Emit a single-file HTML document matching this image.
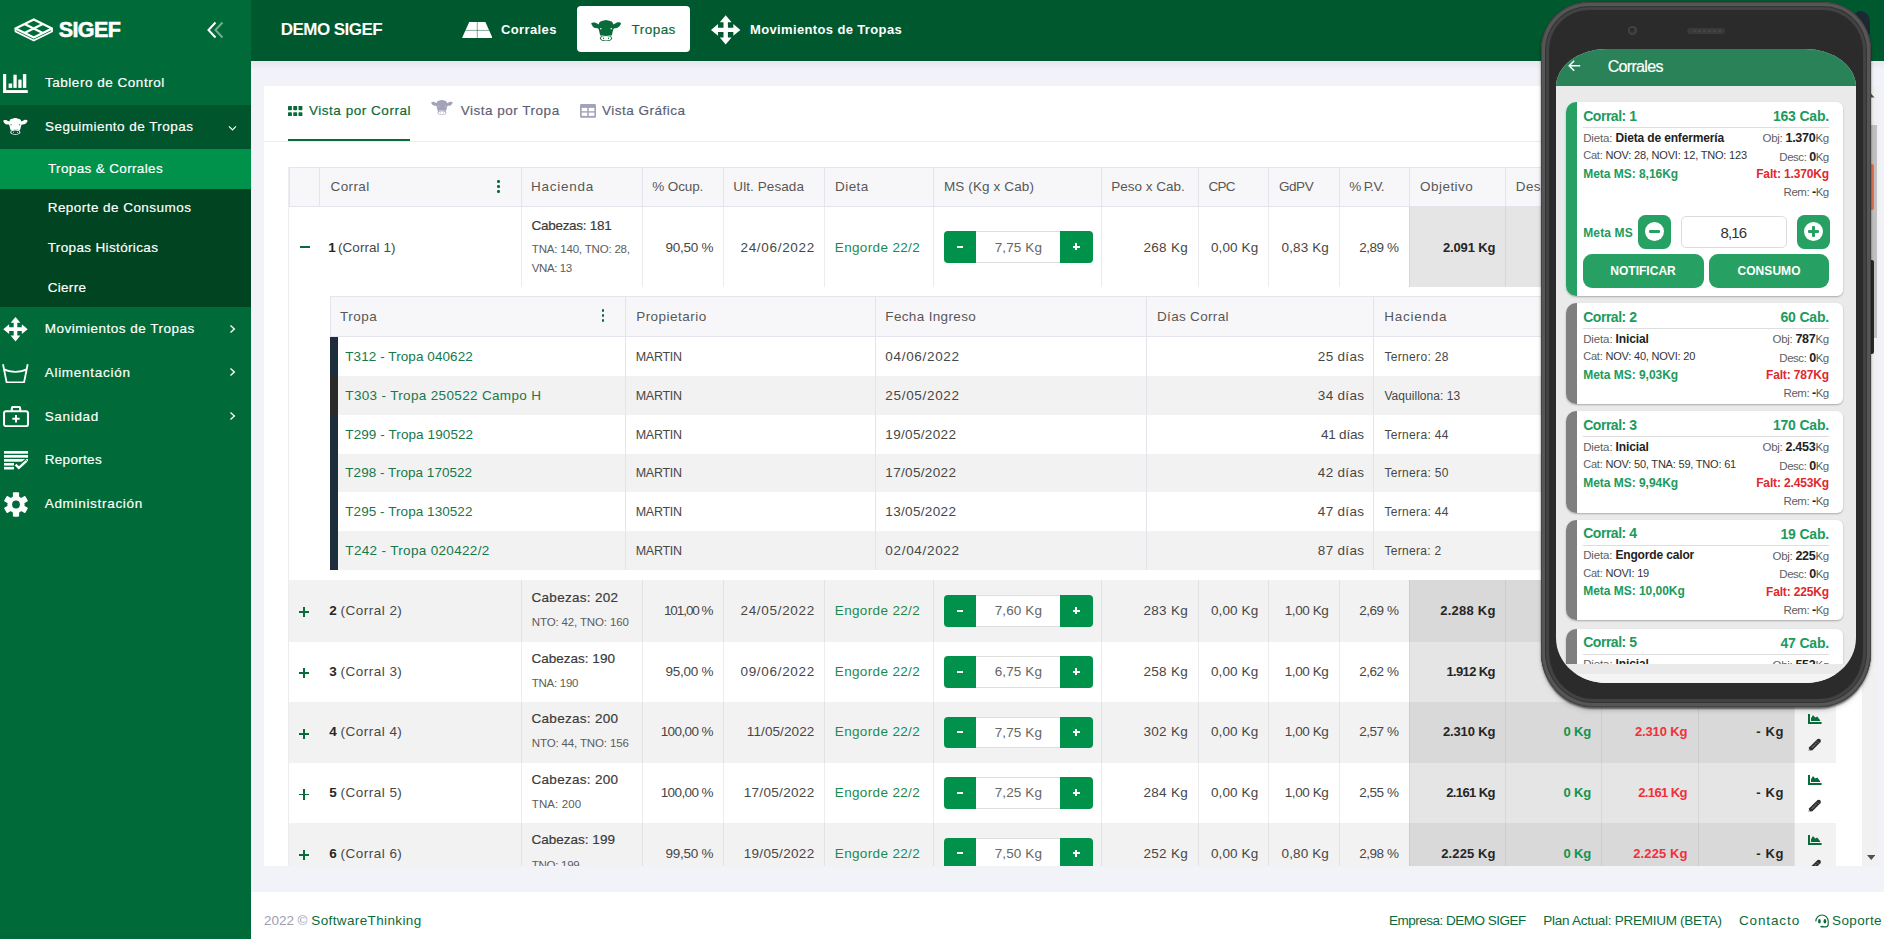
<!DOCTYPE html>
<html><head><meta charset="utf-8"><title>SIGEF</title>
<style>
html,body{margin:0;padding:0;}
body{width:1884px;height:939px;overflow:hidden;position:relative;background:#f2f3f8;font-family:"Liberation Sans",sans-serif;}
.t{position:absolute;white-space:nowrap;display:block;}
.r{position:absolute;display:block;}
</style></head><body>
<div class="r" style="left:251.00px;top:0.00px;width:1633.00px;height:61.00px;background:#00582e;"></div>
<div class="r" style="left:251.00px;top:61.00px;width:1633.00px;height:9.00px;background:linear-gradient(#e6e7ef,#f2f3f8);"></div>
<div class="r" style="left:251.00px;top:891.50px;width:1633.00px;height:47.50px;background:#fff;"></div>
<div class="r" style="left:0.00px;top:0.00px;width:251.00px;height:939.00px;background:#006b38;"></div>
<div class="r" style="left:0.00px;top:105.00px;width:251.00px;height:43.60px;background:#00552c;"></div>
<div class="r" style="left:0.00px;top:148.60px;width:251.00px;height:158.40px;background:#004421;"></div>
<div class="r" style="left:0.00px;top:148.60px;width:251.00px;height:40.20px;background:#00914a;"></div>
<svg class="r" style="left:13.50px;top:17.50px;" width="39.50" height="24.00" viewBox="0 0 79 48"><g fill="none" stroke="#fff" stroke-width="4.6" stroke-linejoin="round"><path d="M39.5 3 L76 21 L39.5 39 L3 21 Z"/><path d="M21 12 L57.5 30 M57.5 12 L21 30"/></g><path d="M3 21 V27 L39.5 45 L76 27 V21" fill="none" stroke="#fff" stroke-width="3.6" stroke-linejoin="round"/></svg>
<span class="t" style="left:58.80px;top:17.80px;font-size:21.5px;line-height:24px;font-weight:700;color:#fff;letter-spacing:-0.629px;-webkit-text-stroke:.55px #fff;">SIGEF</span>
<svg class="r" style="left:205.00px;top:20.00px;" width="21.00" height="20.00" viewBox="0 0 21 20"><path d="M10.5 2.5 L3.5 10 L10.5 17.5" fill="none" stroke="#fff" stroke-width="2"/><path d="M17.5 2.5 L10.5 10 L17.5 17.5" fill="none" stroke="#fff" stroke-opacity=".45" stroke-width="2"/></svg>
<svg class="r" style="left:3.00px;top:73.80px;" width="24.80" height="19.50" viewBox="0 0 24.8 19.5"><g fill="#fff"><rect x="0" y="0" width="3.2" height="19.5"/><rect x="0" y="16.1" width="24.8" height="3.4"/><rect x="5.6" y="9.5" width="3.6" height="4.4"/><rect x="10.4" y="0.7" width="3.3" height="13.2"/><rect x="15.3" y="5.6" width="3.3" height="8.3"/><rect x="19.9" y="0.1" width="3.4" height="13.8"/></g></svg>
<span class="t" style="left:45.00px;top:72.90px;font-size:13.5px;line-height:20px;color:#fff;letter-spacing:0.524px;-webkit-text-stroke:.18px;">Tablero de Control</span>
<svg class="r" style="left:3.00px;top:118.00px;" width="24.80" height="16.80" viewBox="0 0 100 71" preserveAspectRatio="none"><path fill="#fff" d="M0.6 11.3 C3 8 10 7 14.7 9 C19 10.5 22 13 26 15.2 C26.5 11 27 9 28.2 7.3 C30 5 33 4 36.2 3.4 C40 3 45 0 49.2 0 C54 0 59 3 63.3 3.4 C67 4 70 5.5 71.2 7.9 C72.5 10 73.5 12 74 15.2 C78 13 82 10 85.9 8.5 C91 7 97 8 99.4 11.3 C99 14 97.5 17 94.9 19.7 C92 23 89 25.5 85.9 26.5 C82 27.5 79 27.6 76.8 27.6 C75 29 74 30.5 73.4 32.1 C72.5 36 71.5 40 70.6 44.5 C69.5 48 68.8 50.5 67.8 52.4 C64 50 57 49.5 49.7 49.5 C43 49.5 36 50 31.6 52.4 C30.5 50 29.5 47.5 28.8 44.5 C28 40 27 36 26 32.1 C25.5 30 24.5 28.5 22.6 27 C19 27.3 15 27 11.3 25.9 C8 24.5 5.5 21.5 3.4 17.5 C2 15 1 13 0.6 11.3 Z"/><ellipse cx="49.7" cy="60.3" rx="20" ry="10.5" fill="#fff"/><ellipse cx="49.7" cy="60.6" rx="16.6" ry="7.4" fill="#00552c"/><ellipse cx="41.8" cy="60.4" rx="1.7" ry="2.8" fill="#fff"/><ellipse cx="58" cy="60.4" rx="1.7" ry="2.8" fill="#fff"/><ellipse cx="32.6" cy="28.8" rx="2.7" ry="2.3" fill="#00552c"/><ellipse cx="67.2" cy="28.8" rx="2.7" ry="2.3" fill="#00552c"/></svg>
<span class="t" style="left:45.00px;top:117.10px;font-size:13.5px;line-height:20px;color:#fff;letter-spacing:0.454px;-webkit-text-stroke:.18px;">Seguimiento de Tropas</span>
<svg class="r" style="left:227.00px;top:124.00px;" width="11.00" height="9.00" viewBox="0 0 11 9"><path d="M2 2.4 L5.5 6 L9 2.4" fill="none" stroke="#fff" stroke-width="1.15"/></svg>
<span class="t" style="left:48.00px;top:158.90px;font-size:13.5px;line-height:20px;color:#fff;letter-spacing:0.350px;-webkit-text-stroke:.18px;">Tropas &amp; Corrales</span>
<span class="t" style="left:47.70px;top:198.20px;font-size:13.5px;line-height:20px;color:#fff;letter-spacing:0.452px;-webkit-text-stroke:.18px;">Reporte de Consumos</span>
<span class="t" style="left:47.70px;top:237.80px;font-size:13.5px;line-height:20px;color:#fff;letter-spacing:0.358px;-webkit-text-stroke:.18px;">Tropas Históricas</span>
<span class="t" style="left:47.70px;top:277.60px;font-size:13.5px;line-height:20px;color:#fff;letter-spacing:0.304px;-webkit-text-stroke:.18px;">Cierre</span>
<svg class="r" style="left:2.70px;top:317.30px;" width="25.00" height="24.40" viewBox="0 0 100 100"><g fill="#fff"><path d="M50 0 L70 24 H57.5 V42.5 H76 V30 L100 50 L76 70 V57.5 H57.5 V76 H70 L50 100 L30 76 H42.5 V57.5 H24 V70 L0 50 L24 30 V42.5 H42.5 V24 H30 Z"/></g></svg>
<span class="t" style="left:44.70px;top:319.30px;font-size:13.5px;line-height:20px;color:#fff;letter-spacing:0.498px;-webkit-text-stroke:.18px;">Movimientos de Tropas</span>
<svg class="r" style="left:2.30px;top:362.50px;" width="26.70" height="20.50" viewBox="0 0 26.7 20.5"><path d="M1 1.2 L4.6 19.3 H22.1 L25.7 1.2" fill="none" stroke="#fff" stroke-width="1.8" stroke-linejoin="round"/><path d="M2 6.3 C8 9.6 18.7 9.6 24.7 6.3" fill="none" stroke="#fff" stroke-width="1.8"/></svg>
<span class="t" style="left:44.70px;top:362.90px;font-size:13.5px;line-height:20px;color:#fff;letter-spacing:0.725px;-webkit-text-stroke:.18px;">Alimentación</span>
<svg class="r" style="left:2.50px;top:406.00px;" width="26.00" height="21.30" viewBox="0 0 26 21.3"><rect x="1" y="5.2" width="24" height="15" rx="2" fill="none" stroke="#fff" stroke-width="2.1"/><path d="M8.8 5 V2.3 Q8.8 1 10.1 1 H15.9 Q17.2 1 17.2 2.3 V5" fill="none" stroke="#fff" stroke-width="2.1"/><path d="M13 9 V16.4 M9.3 12.7 H16.7" stroke="#fff" stroke-width="2"/></svg>
<span class="t" style="left:44.70px;top:406.60px;font-size:13.5px;line-height:20px;color:#fff;letter-spacing:0.670px;-webkit-text-stroke:.18px;">Sanidad</span>
<svg class="r" style="left:3.50px;top:451.00px;" width="24.00" height="18.50" viewBox="0 0 24 18.5"><g fill="#fff"><rect x="0" y="0" width="24" height="2.7"/><rect x="0" y="4" width="24" height="2.7"/><rect x="0" y="8" width="24" height="2.7"/><rect x="0" y="12" width="10" height="2.6"/><rect x="0" y="15.9" width="10" height="2.6"/></g><path d="M11.6 13.6 L14.8 16.8 L23 9.6" fill="none" stroke="#006b38" stroke-width="5"/><path d="M11.6 13.6 L14.8 16.8 L22.6 9.8" fill="none" stroke="#fff" stroke-width="2.3"/></svg>
<span class="t" style="left:44.70px;top:450.30px;font-size:13.5px;line-height:20px;color:#fff;letter-spacing:0.312px;-webkit-text-stroke:.18px;">Reportes</span>
<svg class="r" style="left:3.50px;top:491.50px;" width="24.00" height="25.00" viewBox="-12 -12.5 24 25"><g fill="#fff"><circle r="8.6"/><rect x="-3.1" y="-12.2" width="6.2" height="6" rx="1" transform="rotate(0)"/><rect x="-3.1" y="-12.2" width="6.2" height="6" rx="1" transform="rotate(60)"/><rect x="-3.1" y="-12.2" width="6.2" height="6" rx="1" transform="rotate(120)"/><rect x="-3.1" y="-12.2" width="6.2" height="6" rx="1" transform="rotate(180)"/><rect x="-3.1" y="-12.2" width="6.2" height="6" rx="1" transform="rotate(240)"/><rect x="-3.1" y="-12.2" width="6.2" height="6" rx="1" transform="rotate(300)"/></g><circle r="3.9" fill="#006b38"/></svg>
<span class="t" style="left:44.70px;top:493.90px;font-size:13.5px;line-height:20px;color:#fff;letter-spacing:0.694px;-webkit-text-stroke:.18px;">Administración</span>
<svg class="r" style="left:228.00px;top:323.70px;" width="9.00" height="10.00" viewBox="0 0 9 10"><path d="M2.5 1.6 L6.3 5 L2.5 8.4" fill="none" stroke="#fff" stroke-width="1.4"/></svg>
<svg class="r" style="left:228.00px;top:367.30px;" width="9.00" height="10.00" viewBox="0 0 9 10"><path d="M2.5 1.6 L6.3 5 L2.5 8.4" fill="none" stroke="#fff" stroke-width="1.4"/></svg>
<svg class="r" style="left:228.00px;top:411.00px;" width="9.00" height="10.00" viewBox="0 0 9 10"><path d="M2.5 1.6 L6.3 5 L2.5 8.4" fill="none" stroke="#fff" stroke-width="1.4"/></svg>
<span class="t" style="left:280.70px;top:18.80px;font-size:17px;line-height:22px;font-weight:700;color:#fff;letter-spacing:-0.526px;">DEMO SIGEF</span>
<svg class="r" style="left:461.70px;top:21.70px;" width="30.60" height="16.10" viewBox="0 0 30.6 16.1"><path d="M7.2 0 H23.4 L30.6 16.1 H0 Z" fill="#fff"/><path d="M15.3 0 V16.1 M3.3 8.4 H27.3" stroke="#00582e" stroke-width="0.9" stroke-opacity=".55"/></svg>
<span class="t" style="left:501.00px;top:19.90px;font-size:13px;line-height:20px;font-weight:700;color:#fff;letter-spacing:0.376px;">Corrales</span>
<div class="r" style="left:577.00px;top:5.60px;width:113.20px;height:46.60px;background:#fff;border-radius:4px;"></div>
<svg class="r" style="left:590.80px;top:19.60px;" width="30.20" height="21.50" viewBox="0 0 100 71" preserveAspectRatio="none"><path fill="#0a6b3a" d="M0.6 11.3 C3 8 10 7 14.7 9 C19 10.5 22 13 26 15.2 C26.5 11 27 9 28.2 7.3 C30 5 33 4 36.2 3.4 C40 3 45 0 49.2 0 C54 0 59 3 63.3 3.4 C67 4 70 5.5 71.2 7.9 C72.5 10 73.5 12 74 15.2 C78 13 82 10 85.9 8.5 C91 7 97 8 99.4 11.3 C99 14 97.5 17 94.9 19.7 C92 23 89 25.5 85.9 26.5 C82 27.5 79 27.6 76.8 27.6 C75 29 74 30.5 73.4 32.1 C72.5 36 71.5 40 70.6 44.5 C69.5 48 68.8 50.5 67.8 52.4 C64 50 57 49.5 49.7 49.5 C43 49.5 36 50 31.6 52.4 C30.5 50 29.5 47.5 28.8 44.5 C28 40 27 36 26 32.1 C25.5 30 24.5 28.5 22.6 27 C19 27.3 15 27 11.3 25.9 C8 24.5 5.5 21.5 3.4 17.5 C2 15 1 13 0.6 11.3 Z"/><ellipse cx="49.7" cy="60.3" rx="20" ry="10.5" fill="#0a6b3a"/><ellipse cx="49.7" cy="60.6" rx="16.6" ry="7.4" fill="#fff"/><ellipse cx="41.8" cy="60.4" rx="1.7" ry="2.8" fill="#0a6b3a"/><ellipse cx="58" cy="60.4" rx="1.7" ry="2.8" fill="#0a6b3a"/><ellipse cx="32.6" cy="28.8" rx="2.7" ry="2.3" fill="#fff"/><ellipse cx="67.2" cy="28.8" rx="2.7" ry="2.3" fill="#fff"/></svg>
<span class="t" style="left:631.60px;top:19.90px;font-size:13.5px;line-height:20px;color:#0a6b3a;letter-spacing:0.451px;-webkit-text-stroke:.18px;">Tropas</span>
<svg class="r" style="left:711.30px;top:14.80px;" width="29.40" height="29.80" viewBox="0 0 100 100"><g fill="#fff"><path d="M50 0 L70 24 H57.5 V42.5 H76 V30 L100 50 L76 70 V57.5 H57.5 V76 H70 L50 100 L30 76 H42.5 V57.5 H24 V70 L0 50 L24 30 V42.5 H42.5 V24 H30 Z"/></g></svg>
<span class="t" style="left:750.00px;top:19.90px;font-size:13px;line-height:20px;font-weight:700;color:#fff;letter-spacing:0.362px;">Movimientos de Tropas</span>
<div class="r" style="left:264.00px;top:86.30px;width:1615.00px;height:780.10px;background:#fff;"></div>
<div class="r" style="left:1862.00px;top:86.30px;width:17.00px;height:780.10px;background:#f1f1f1;"></div>
<div class="r" style="left:1864.00px;top:125.00px;width:13.00px;height:213.00px;background:#c1c1c1;"></div>
<svg class="r" style="left:1866.00px;top:92.00px;" width="9.00" height="6.00" viewBox="0 0 9 6"><path d="M0.5 5.5 L4.5 1 L8.5 5.5 Z" fill="#505050"/></svg>
<svg class="r" style="left:1866.50px;top:855.00px;" width="8.50" height="5.00" viewBox="0 0 8.5 5"><path d="M0 0 H8.5 L4.25 5 Z" fill="#505050"/></svg>
<svg class="r" style="left:288.20px;top:105.80px;" width="14.40" height="10.50" viewBox="0 0 14.4 10.5"><g fill="#0a6b3a"><rect x="0" y="0" width="3.9" height="4.2" rx=".6"/><rect x="0" y="6.3" width="3.9" height="4.2" rx=".6"/><rect x="5.25" y="0" width="3.9" height="4.2" rx=".6"/><rect x="5.25" y="6.3" width="3.9" height="4.2" rx=".6"/><rect x="10.5" y="0" width="3.9" height="4.2" rx=".6"/><rect x="10.5" y="6.3" width="3.9" height="4.2" rx=".6"/></g></svg>
<span class="t" style="left:309.00px;top:100.90px;font-size:13.5px;line-height:20px;color:#0a6b3a;letter-spacing:0.528px;-webkit-text-stroke:.18px;">Vista por Corral</span>
<div class="r" style="left:288.20px;top:139.00px;width:122.30px;height:2.00px;background:#0a6b3a;"></div>
<div class="r" style="left:264.00px;top:141.00px;width:1598.00px;height:1.00px;background:#ebedf2;"></div>
<svg class="r" style="left:430.70px;top:99.50px;" width="21.90" height="15.10" viewBox="0 0 100 71" preserveAspectRatio="none"><path fill="#a2a3b9" d="M0.6 11.3 C3 8 10 7 14.7 9 C19 10.5 22 13 26 15.2 C26.5 11 27 9 28.2 7.3 C30 5 33 4 36.2 3.4 C40 3 45 0 49.2 0 C54 0 59 3 63.3 3.4 C67 4 70 5.5 71.2 7.9 C72.5 10 73.5 12 74 15.2 C78 13 82 10 85.9 8.5 C91 7 97 8 99.4 11.3 C99 14 97.5 17 94.9 19.7 C92 23 89 25.5 85.9 26.5 C82 27.5 79 27.6 76.8 27.6 C75 29 74 30.5 73.4 32.1 C72.5 36 71.5 40 70.6 44.5 C69.5 48 68.8 50.5 67.8 52.4 C64 50 57 49.5 49.7 49.5 C43 49.5 36 50 31.6 52.4 C30.5 50 29.5 47.5 28.8 44.5 C28 40 27 36 26 32.1 C25.5 30 24.5 28.5 22.6 27 C19 27.3 15 27 11.3 25.9 C8 24.5 5.5 21.5 3.4 17.5 C2 15 1 13 0.6 11.3 Z"/><ellipse cx="49.7" cy="60.3" rx="20" ry="10.5" fill="#a2a3b9"/><ellipse cx="49.7" cy="60.6" rx="16.6" ry="7.4" fill="#fff"/><ellipse cx="41.8" cy="60.4" rx="1.7" ry="2.8" fill="#a2a3b9"/><ellipse cx="58" cy="60.4" rx="1.7" ry="2.8" fill="#a2a3b9"/><ellipse cx="32.6" cy="28.8" rx="2.7" ry="2.3" fill="#fff"/><ellipse cx="67.2" cy="28.8" rx="2.7" ry="2.3" fill="#fff"/></svg>
<span class="t" style="left:460.70px;top:100.90px;font-size:13.5px;line-height:20px;color:#5d5f77;letter-spacing:0.511px;-webkit-text-stroke:.18px;">Vista por Tropa</span>
<svg class="r" style="left:579.50px;top:104.20px;" width="16.10" height="13.80" viewBox="0 0 16.1 13.8"><rect width="16.1" height="13.8" rx="1.3" fill="#a2a3b9"/><g fill="#fff"><rect x="1.7" y="3.9" width="5.6" height="3.3"/><rect x="8.8" y="3.9" width="5.6" height="3.3"/><rect x="1.7" y="8.6" width="5.6" height="3.3"/><rect x="8.8" y="8.6" width="5.6" height="3.3"/></g></svg>
<span class="t" style="left:602.00px;top:100.90px;font-size:13.5px;line-height:20px;color:#5d5f77;letter-spacing:0.496px;-webkit-text-stroke:.18px;">Vista Gráfica</span>
<div class="r" style="left:0;top:0;width:1862px;height:866.4px;overflow:hidden">
<div class="r" style="left:288.80px;top:167.00px;width:1547.50px;height:39.75px;background:#f7f7fa;box-sizing:border-box;border:1px solid #e4e5ec;"></div>
<div class="r" style="left:319.00px;top:167.00px;width:1.00px;height:39.75px;background:#e4e5ec;"></div>
<div class="r" style="left:520.90px;top:167.00px;width:1.00px;height:39.75px;background:#e4e5ec;"></div>
<div class="r" style="left:642.00px;top:167.00px;width:1.00px;height:39.75px;background:#e4e5ec;"></div>
<div class="r" style="left:723.20px;top:167.00px;width:1.00px;height:39.75px;background:#e4e5ec;"></div>
<div class="r" style="left:824.00px;top:167.00px;width:1.00px;height:39.75px;background:#e4e5ec;"></div>
<div class="r" style="left:933.10px;top:167.00px;width:1.00px;height:39.75px;background:#e4e5ec;"></div>
<div class="r" style="left:1100.90px;top:167.00px;width:1.00px;height:39.75px;background:#e4e5ec;"></div>
<div class="r" style="left:1197.90px;top:167.00px;width:1.00px;height:39.75px;background:#e4e5ec;"></div>
<div class="r" style="left:1267.90px;top:167.00px;width:1.00px;height:39.75px;background:#e4e5ec;"></div>
<div class="r" style="left:1338.50px;top:167.00px;width:1.00px;height:39.75px;background:#e4e5ec;"></div>
<div class="r" style="left:1408.80px;top:167.00px;width:1.00px;height:39.75px;background:#e4e5ec;"></div>
<div class="r" style="left:1504.80px;top:167.00px;width:1.00px;height:39.75px;background:#e4e5ec;"></div>
<div class="r" style="left:1600.80px;top:167.00px;width:1.00px;height:39.75px;background:#e4e5ec;"></div>
<div class="r" style="left:1697.80px;top:167.00px;width:1.00px;height:39.75px;background:#e4e5ec;"></div>
<div class="r" style="left:1794.30px;top:167.00px;width:1.00px;height:39.75px;background:#e4e5ec;"></div>
<span class="t" style="left:330.50px;top:177.10px;font-size:13.5px;line-height:20px;color:#575757;letter-spacing:0.394px;">Corral</span>
<span class="t" style="left:531.00px;top:177.10px;font-size:13.5px;line-height:20px;color:#575757;letter-spacing:0.746px;">Hacienda</span>
<span class="t" style="left:652.30px;top:177.10px;font-size:13.5px;line-height:20px;color:#575757;letter-spacing:-0.130px;">% Ocup.</span>
<span class="t" style="left:733.30px;top:177.10px;font-size:13.5px;line-height:20px;color:#575757;letter-spacing:0.089px;">Ult. Pesada</span>
<span class="t" style="left:835.00px;top:177.10px;font-size:13.5px;line-height:20px;color:#575757;letter-spacing:0.442px;">Dieta</span>
<span class="t" style="left:944.00px;top:177.10px;font-size:13.5px;line-height:20px;color:#575757;letter-spacing:0.121px;">MS (Kg x Cab)</span>
<span class="t" style="left:1111.20px;top:177.10px;font-size:13.5px;line-height:20px;color:#575757;letter-spacing:-0.006px;">Peso x Cab.</span>
<span class="t" style="left:1208.60px;top:177.10px;font-size:13.5px;line-height:20px;color:#575757;letter-spacing:-0.750px;">CPC</span>
<span class="t" style="left:1278.90px;top:177.10px;font-size:13.5px;line-height:20px;color:#575757;letter-spacing:-0.405px;">GdPV</span>
<span class="t" style="left:1349.20px;top:177.10px;font-size:13.5px;line-height:20px;color:#575757;letter-spacing:-0.616px;">% P.V.</span>
<span class="t" style="left:1419.90px;top:177.10px;font-size:13.5px;line-height:20px;color:#575757;letter-spacing:0.493px;">Objetivo</span>
<span class="t" style="left:1515.80px;top:177.10px;font-size:13.5px;line-height:20px;color:#575757;letter-spacing:0.371px;">Desc.</span>
<span class="t" style="left:1612.00px;top:177.10px;font-size:13.5px;line-height:20px;color:#575757;letter-spacing:0.434px;">Falt.</span>
<span class="t" style="left:1709.00px;top:177.10px;font-size:13.5px;line-height:20px;color:#575757;letter-spacing:-0.422px;">Rem.</span>
<div class="r" style="left:497.40px;top:180.00px;width:2.60px;height:2.60px;background:#0a6b3a;border-radius:50%;"></div>
<div class="r" style="left:497.40px;top:185.00px;width:2.60px;height:2.60px;background:#0a6b3a;border-radius:50%;"></div>
<div class="r" style="left:497.40px;top:190.00px;width:2.60px;height:2.60px;background:#0a6b3a;border-radius:50%;"></div>
<div class="r" style="left:288.80px;top:287.00px;width:1547.50px;height:293.00px;background:#fff;"></div>
<div class="r" style="left:288.80px;top:206.75px;width:1547.50px;height:80.25px;background:#fff;"></div>
<div class="r" style="left:1409.30px;top:206.75px;width:385.50px;height:80.25px;background:#e5e5e5;"></div>
<div class="r" style="left:520.90px;top:206.75px;width:1.00px;height:80.25px;background:#ebebf0;"></div>
<div class="r" style="left:642.00px;top:206.75px;width:1.00px;height:80.25px;background:#ebebf0;"></div>
<div class="r" style="left:723.20px;top:206.75px;width:1.00px;height:80.25px;background:#ebebf0;"></div>
<div class="r" style="left:824.00px;top:206.75px;width:1.00px;height:80.25px;background:#ebebf0;"></div>
<div class="r" style="left:933.10px;top:206.75px;width:1.00px;height:80.25px;background:#ebebf0;"></div>
<div class="r" style="left:1100.90px;top:206.75px;width:1.00px;height:80.25px;background:#ebebf0;"></div>
<div class="r" style="left:1197.90px;top:206.75px;width:1.00px;height:80.25px;background:#ebebf0;"></div>
<div class="r" style="left:1267.90px;top:206.75px;width:1.00px;height:80.25px;background:#ebebf0;"></div>
<div class="r" style="left:1338.50px;top:206.75px;width:1.00px;height:80.25px;background:#ebebf0;"></div>
<div class="r" style="left:1408.80px;top:206.75px;width:1.00px;height:80.25px;background:#d6d8d8;"></div>
<div class="r" style="left:1504.80px;top:206.75px;width:1.00px;height:80.25px;background:#d6d8d8;"></div>
<div class="r" style="left:1600.80px;top:206.75px;width:1.00px;height:80.25px;background:#d6d8d8;"></div>
<div class="r" style="left:1697.80px;top:206.75px;width:1.00px;height:80.25px;background:#d6d8d8;"></div>
<div class="r" style="left:1794.30px;top:206.75px;width:1.00px;height:80.25px;background:#ebebf0;"></div>
<div class="r" style="left:299.50px;top:246.47px;width:10.00px;height:2.00px;background:#0a6b3a;"></div>
<span class="t" style="left:328.30px;top:237.78px;font-size:13.5px;line-height:20px;font-weight:700;color:#262626;letter-spacing:0.000px;">1</span>
<span class="t" style="left:338.00px;top:237.78px;font-size:13.5px;line-height:20px;color:#474747;letter-spacing:0.061px;">(Corral 1)</span>
<span class="t" style="left:531.50px;top:215.55px;font-size:13.5px;line-height:20px;color:#3a3a3a;letter-spacing:-0.280px;-webkit-text-stroke:.18px;">Cabezas: 181</span>
<span class="t" style="left:531.80px;top:239.25px;font-size:11.5px;line-height:20px;color:#5c5c5c;letter-spacing:-0.188px;">TNA: 140, TNO: 28,</span>
<span class="t" style="left:531.80px;top:258.05px;font-size:11.5px;line-height:20px;color:#5c5c5c;letter-spacing:-0.397px;">VNA: 13</span>
<span class="t" style="left:665.60px;top:237.78px;font-size:13.5px;line-height:20px;color:#474747;letter-spacing:-0.276px;">90,50 %</span>
<span class="t" style="left:740.46px;top:237.78px;font-size:13.5px;line-height:20px;color:#474747;letter-spacing:0.691px;">24/06/2022</span>
<span class="t" style="left:834.80px;top:237.78px;font-size:13.5px;line-height:20px;color:#1b8a50;letter-spacing:0.352px;">Engorde 22/2</span>
<div class="r" style="left:943.90px;top:230.97px;width:31.80px;height:31.80px;background:#00914a;border-radius:4px 0 0 4px;"></div>
<div class="r" style="left:1059.70px;top:230.97px;width:32.90px;height:31.80px;background:#00914a;border-radius:0 4px 4px 0;"></div>
<div class="r" style="left:975.70px;top:230.97px;width:84.00px;height:31.80px;background:#fff;box-sizing:border-box;border-top:1px solid #dedede;border-bottom:1px solid #dedede;"></div>
<div class="r" style="left:956.50px;top:245.68px;width:6.50px;height:2.00px;background:#fff;"></div>
<div class="r" style="left:1072.70px;top:245.68px;width:7.00px;height:2.00px;background:#fff;"></div>
<div class="r" style="left:1075.20px;top:243.18px;width:2.00px;height:7.00px;background:#fff;"></div>
<span class="t" style="left:994.67px;top:238.08px;font-size:13.5px;line-height:20px;color:#666;letter-spacing:0.117px;">7,75 Kg</span>
<span class="t" style="left:1143.46px;top:237.78px;font-size:13.5px;line-height:20px;color:#474747;letter-spacing:0.306px;">268 Kg</span>
<span class="t" style="left:1210.93px;top:237.78px;font-size:13.5px;line-height:20px;color:#474747;letter-spacing:0.117px;">0,00 Kg</span>
<span class="t" style="left:1281.53px;top:237.78px;font-size:13.5px;line-height:20px;color:#474747;letter-spacing:0.117px;">0,83 Kg</span>
<span class="t" style="left:1359.15px;top:237.78px;font-size:13.5px;line-height:20px;color:#474747;letter-spacing:-0.440px;">2,89 %</span>
<span class="t" style="left:1443.00px;top:237.78px;font-size:13px;line-height:20px;font-weight:700;color:#262626;letter-spacing:-0.155px;">2.091 Kg</span>
<span class="t" style="left:1563.60px;top:237.78px;font-size:13px;line-height:20px;font-weight:700;color:#12934f;letter-spacing:-0.157px;">0 Kg</span>
<span class="t" style="left:1635.00px;top:237.78px;font-size:13px;line-height:20px;font-weight:700;color:#f1303a;letter-spacing:-0.155px;">2.091 Kg</span>
<span class="t" style="left:1756.20px;top:237.78px;font-size:13px;line-height:20px;font-weight:700;color:#262626;letter-spacing:0.678px;">- Kg</span>
<svg class="r" style="left:1808.40px;top:228.88px;" width="13.60" height="10.00" viewBox="0 0 13.6 10"><path d="M1 0 V9 H13.6" fill="none" stroke="#0a6b3a" stroke-width="2"/><path d="M3 7 V4.2 L5 1 L7.2 3.6 L9.2 2.4 L12.2 6.2 V7 Z" fill="#0a6b3a"/></svg>
<svg class="r" style="left:1808.40px;top:252.67px;" width="13.60" height="13.00" viewBox="0 0 13.6 13"><path d="M8.6 2 L11.6 5 L4.4 12.2 L0.6 12.8 L1.2 9.2 Z" fill="#2e2e2e"/><circle cx="10.7" cy="2.9" r="2.2" fill="#2e2e2e"/><path d="M3.6 10 L8.4 5.2" stroke="#e8e8e8" stroke-width=".7" stroke-dasharray="1 .5"/><path d="M0.7 12.7 L1 10.9 L2.5 12.4 Z" fill="#e0e0e0"/><path d="M8.9 3.3 L10.3 4.7" stroke="#e8e8e8" stroke-width=".5"/></svg>
<div class="r" style="left:288.80px;top:580.00px;width:1547.50px;height:61.80px;background:#f2f2f2;"></div>
<div class="r" style="left:1409.30px;top:580.00px;width:385.50px;height:61.80px;background:#d9d9d9;"></div>
<div class="r" style="left:520.90px;top:580.00px;width:1.00px;height:61.80px;background:#e2e2e6;"></div>
<div class="r" style="left:642.00px;top:580.00px;width:1.00px;height:61.80px;background:#e2e2e6;"></div>
<div class="r" style="left:723.20px;top:580.00px;width:1.00px;height:61.80px;background:#e2e2e6;"></div>
<div class="r" style="left:824.00px;top:580.00px;width:1.00px;height:61.80px;background:#e2e2e6;"></div>
<div class="r" style="left:933.10px;top:580.00px;width:1.00px;height:61.80px;background:#e2e2e6;"></div>
<div class="r" style="left:1100.90px;top:580.00px;width:1.00px;height:61.80px;background:#e2e2e6;"></div>
<div class="r" style="left:1197.90px;top:580.00px;width:1.00px;height:61.80px;background:#e2e2e6;"></div>
<div class="r" style="left:1267.90px;top:580.00px;width:1.00px;height:61.80px;background:#e2e2e6;"></div>
<div class="r" style="left:1338.50px;top:580.00px;width:1.00px;height:61.80px;background:#e2e2e6;"></div>
<div class="r" style="left:1408.80px;top:580.00px;width:1.00px;height:61.80px;background:#cbcdcd;"></div>
<div class="r" style="left:1504.80px;top:580.00px;width:1.00px;height:61.80px;background:#cbcdcd;"></div>
<div class="r" style="left:1600.80px;top:580.00px;width:1.00px;height:61.80px;background:#cbcdcd;"></div>
<div class="r" style="left:1697.80px;top:580.00px;width:1.00px;height:61.80px;background:#cbcdcd;"></div>
<div class="r" style="left:1794.30px;top:580.00px;width:1.00px;height:61.80px;background:#e2e2e6;"></div>
<div class="r" style="left:298.80px;top:611.40px;width:10.40px;height:1.80px;background:#0a6b3a;"></div>
<div class="r" style="left:303.10px;top:607.10px;width:1.80px;height:10.40px;background:#0a6b3a;"></div>
<span class="t" style="left:329.30px;top:600.80px;font-size:13.5px;line-height:20px;font-weight:700;color:#262626;letter-spacing:0.000px;">2</span>
<span class="t" style="left:340.60px;top:600.80px;font-size:13.5px;line-height:20px;color:#474747;letter-spacing:0.473px;">(Corral 2)</span>
<span class="t" style="left:531.50px;top:587.55px;font-size:13.5px;line-height:20px;color:#3a3a3a;letter-spacing:0.299px;-webkit-text-stroke:.18px;">Cabezas: 202</span>
<span class="t" style="left:531.80px;top:611.85px;font-size:11.5px;line-height:20px;color:#5c5c5c;letter-spacing:-0.144px;">NTO: 42, TNO: 160</span>
<span class="t" style="left:663.90px;top:600.80px;font-size:13.5px;line-height:20px;color:#474747;letter-spacing:-1.069px;">101,00 %</span>
<span class="t" style="left:740.46px;top:600.80px;font-size:13.5px;line-height:20px;color:#474747;letter-spacing:0.691px;">24/05/2022</span>
<span class="t" style="left:834.80px;top:600.80px;font-size:13.5px;line-height:20px;color:#1b8a50;letter-spacing:0.352px;">Engorde 22/2</span>
<div class="r" style="left:943.90px;top:595.00px;width:31.80px;height:31.80px;background:#00914a;border-radius:4px 0 0 4px;"></div>
<div class="r" style="left:1059.70px;top:595.00px;width:32.90px;height:31.80px;background:#00914a;border-radius:0 4px 4px 0;"></div>
<div class="r" style="left:975.70px;top:595.00px;width:84.00px;height:31.80px;background:#fff;box-sizing:border-box;border-top:1px solid #dedede;border-bottom:1px solid #dedede;"></div>
<div class="r" style="left:956.50px;top:609.70px;width:6.50px;height:2.00px;background:#fff;"></div>
<div class="r" style="left:1072.70px;top:609.70px;width:7.00px;height:2.00px;background:#fff;"></div>
<div class="r" style="left:1075.20px;top:607.20px;width:2.00px;height:7.00px;background:#fff;"></div>
<span class="t" style="left:994.67px;top:601.10px;font-size:13.5px;line-height:20px;color:#666;letter-spacing:0.117px;">7,60 Kg</span>
<span class="t" style="left:1143.46px;top:600.80px;font-size:13.5px;line-height:20px;color:#474747;letter-spacing:0.306px;">283 Kg</span>
<span class="t" style="left:1210.93px;top:600.80px;font-size:13.5px;line-height:20px;color:#474747;letter-spacing:0.117px;">0,00 Kg</span>
<span class="t" style="left:1284.72px;top:600.80px;font-size:13.5px;line-height:20px;color:#474747;letter-spacing:-0.414px;">1,00 Kg</span>
<span class="t" style="left:1359.15px;top:600.80px;font-size:13.5px;line-height:20px;color:#474747;letter-spacing:-0.440px;">2,69 %</span>
<span class="t" style="left:1440.20px;top:600.80px;font-size:13px;line-height:20px;font-weight:700;color:#262626;letter-spacing:0.245px;">2.288 Kg</span>
<span class="t" style="left:1563.60px;top:600.80px;font-size:13px;line-height:20px;font-weight:700;color:#12934f;letter-spacing:-0.157px;">0 Kg</span>
<span class="t" style="left:1632.20px;top:600.80px;font-size:13px;line-height:20px;font-weight:700;color:#f1303a;letter-spacing:0.245px;">2.288 Kg</span>
<span class="t" style="left:1756.20px;top:600.80px;font-size:13px;line-height:20px;font-weight:700;color:#262626;letter-spacing:0.678px;">- Kg</span>
<svg class="r" style="left:1808.40px;top:592.60px;" width="13.60" height="10.00" viewBox="0 0 13.6 10"><path d="M1 0 V9 H13.6" fill="none" stroke="#0a6b3a" stroke-width="2"/><path d="M3 7 V4.2 L5 1 L7.2 3.6 L9.2 2.4 L12.2 6.2 V7 Z" fill="#0a6b3a"/></svg>
<svg class="r" style="left:1808.40px;top:616.40px;" width="13.60" height="13.00" viewBox="0 0 13.6 13"><path d="M8.6 2 L11.6 5 L4.4 12.2 L0.6 12.8 L1.2 9.2 Z" fill="#2e2e2e"/><circle cx="10.7" cy="2.9" r="2.2" fill="#2e2e2e"/><path d="M3.6 10 L8.4 5.2" stroke="#e8e8e8" stroke-width=".7" stroke-dasharray="1 .5"/><path d="M0.7 12.7 L1 10.9 L2.5 12.4 Z" fill="#e0e0e0"/><path d="M8.9 3.3 L10.3 4.7" stroke="#e8e8e8" stroke-width=".5"/></svg>
<div class="r" style="left:288.80px;top:641.80px;width:1547.50px;height:60.20px;background:#fff;"></div>
<div class="r" style="left:1409.30px;top:641.80px;width:385.50px;height:60.20px;background:#e5e5e5;"></div>
<div class="r" style="left:520.90px;top:641.80px;width:1.00px;height:60.20px;background:#ebebf0;"></div>
<div class="r" style="left:642.00px;top:641.80px;width:1.00px;height:60.20px;background:#ebebf0;"></div>
<div class="r" style="left:723.20px;top:641.80px;width:1.00px;height:60.20px;background:#ebebf0;"></div>
<div class="r" style="left:824.00px;top:641.80px;width:1.00px;height:60.20px;background:#ebebf0;"></div>
<div class="r" style="left:933.10px;top:641.80px;width:1.00px;height:60.20px;background:#ebebf0;"></div>
<div class="r" style="left:1100.90px;top:641.80px;width:1.00px;height:60.20px;background:#ebebf0;"></div>
<div class="r" style="left:1197.90px;top:641.80px;width:1.00px;height:60.20px;background:#ebebf0;"></div>
<div class="r" style="left:1267.90px;top:641.80px;width:1.00px;height:60.20px;background:#ebebf0;"></div>
<div class="r" style="left:1338.50px;top:641.80px;width:1.00px;height:60.20px;background:#ebebf0;"></div>
<div class="r" style="left:1408.80px;top:641.80px;width:1.00px;height:60.20px;background:#d6d8d8;"></div>
<div class="r" style="left:1504.80px;top:641.80px;width:1.00px;height:60.20px;background:#d6d8d8;"></div>
<div class="r" style="left:1600.80px;top:641.80px;width:1.00px;height:60.20px;background:#d6d8d8;"></div>
<div class="r" style="left:1697.80px;top:641.80px;width:1.00px;height:60.20px;background:#d6d8d8;"></div>
<div class="r" style="left:1794.30px;top:641.80px;width:1.00px;height:60.20px;background:#ebebf0;"></div>
<div class="r" style="left:298.80px;top:672.40px;width:10.40px;height:1.80px;background:#0a6b3a;"></div>
<div class="r" style="left:303.10px;top:668.10px;width:1.80px;height:10.40px;background:#0a6b3a;"></div>
<span class="t" style="left:329.30px;top:661.80px;font-size:13.5px;line-height:20px;font-weight:700;color:#262626;letter-spacing:0.000px;">3</span>
<span class="t" style="left:340.60px;top:661.80px;font-size:13.5px;line-height:20px;color:#474747;letter-spacing:0.473px;">(Corral 3)</span>
<span class="t" style="left:531.50px;top:648.55px;font-size:13.5px;line-height:20px;color:#3a3a3a;letter-spacing:0.010px;-webkit-text-stroke:.18px;">Cabezas: 190</span>
<span class="t" style="left:531.80px;top:672.85px;font-size:11.5px;line-height:20px;color:#5c5c5c;letter-spacing:-0.279px;">TNA: 190</span>
<span class="t" style="left:665.60px;top:661.80px;font-size:13.5px;line-height:20px;color:#474747;letter-spacing:-0.276px;">95,00 %</span>
<span class="t" style="left:740.46px;top:661.80px;font-size:13.5px;line-height:20px;color:#474747;letter-spacing:0.691px;">09/06/2022</span>
<span class="t" style="left:834.80px;top:661.80px;font-size:13.5px;line-height:20px;color:#1b8a50;letter-spacing:0.352px;">Engorde 22/2</span>
<div class="r" style="left:943.90px;top:656.00px;width:31.80px;height:31.80px;background:#00914a;border-radius:4px 0 0 4px;"></div>
<div class="r" style="left:1059.70px;top:656.00px;width:32.90px;height:31.80px;background:#00914a;border-radius:0 4px 4px 0;"></div>
<div class="r" style="left:975.70px;top:656.00px;width:84.00px;height:31.80px;background:#fff;box-sizing:border-box;border-top:1px solid #dedede;border-bottom:1px solid #dedede;"></div>
<div class="r" style="left:956.50px;top:670.70px;width:6.50px;height:2.00px;background:#fff;"></div>
<div class="r" style="left:1072.70px;top:670.70px;width:7.00px;height:2.00px;background:#fff;"></div>
<div class="r" style="left:1075.20px;top:668.20px;width:2.00px;height:7.00px;background:#fff;"></div>
<span class="t" style="left:994.67px;top:662.10px;font-size:13.5px;line-height:20px;color:#666;letter-spacing:0.117px;">6,75 Kg</span>
<span class="t" style="left:1143.46px;top:661.80px;font-size:13.5px;line-height:20px;color:#474747;letter-spacing:0.306px;">258 Kg</span>
<span class="t" style="left:1210.93px;top:661.80px;font-size:13.5px;line-height:20px;color:#474747;letter-spacing:0.117px;">0,00 Kg</span>
<span class="t" style="left:1284.72px;top:661.80px;font-size:13.5px;line-height:20px;color:#474747;letter-spacing:-0.414px;">1,00 Kg</span>
<span class="t" style="left:1359.15px;top:661.80px;font-size:13.5px;line-height:20px;color:#474747;letter-spacing:-0.440px;">2,62 %</span>
<span class="t" style="left:1446.50px;top:661.80px;font-size:13px;line-height:20px;font-weight:700;color:#262626;letter-spacing:-0.655px;">1.912 Kg</span>
<span class="t" style="left:1563.60px;top:661.80px;font-size:13px;line-height:20px;font-weight:700;color:#12934f;letter-spacing:-0.157px;">0 Kg</span>
<span class="t" style="left:1638.50px;top:661.80px;font-size:13px;line-height:20px;font-weight:700;color:#f1303a;letter-spacing:-0.655px;">1.912 Kg</span>
<span class="t" style="left:1756.20px;top:661.80px;font-size:13px;line-height:20px;font-weight:700;color:#262626;letter-spacing:0.678px;">- Kg</span>
<svg class="r" style="left:1808.40px;top:653.60px;" width="13.60" height="10.00" viewBox="0 0 13.6 10"><path d="M1 0 V9 H13.6" fill="none" stroke="#0a6b3a" stroke-width="2"/><path d="M3 7 V4.2 L5 1 L7.2 3.6 L9.2 2.4 L12.2 6.2 V7 Z" fill="#0a6b3a"/></svg>
<svg class="r" style="left:1808.40px;top:677.40px;" width="13.60" height="13.00" viewBox="0 0 13.6 13"><path d="M8.6 2 L11.6 5 L4.4 12.2 L0.6 12.8 L1.2 9.2 Z" fill="#2e2e2e"/><circle cx="10.7" cy="2.9" r="2.2" fill="#2e2e2e"/><path d="M3.6 10 L8.4 5.2" stroke="#e8e8e8" stroke-width=".7" stroke-dasharray="1 .5"/><path d="M0.7 12.7 L1 10.9 L2.5 12.4 Z" fill="#e0e0e0"/><path d="M8.9 3.3 L10.3 4.7" stroke="#e8e8e8" stroke-width=".5"/></svg>
<div class="r" style="left:288.80px;top:702.00px;width:1547.50px;height:60.80px;background:#f2f2f2;"></div>
<div class="r" style="left:1409.30px;top:702.00px;width:385.50px;height:60.80px;background:#d9d9d9;"></div>
<div class="r" style="left:520.90px;top:702.00px;width:1.00px;height:60.80px;background:#e2e2e6;"></div>
<div class="r" style="left:642.00px;top:702.00px;width:1.00px;height:60.80px;background:#e2e2e6;"></div>
<div class="r" style="left:723.20px;top:702.00px;width:1.00px;height:60.80px;background:#e2e2e6;"></div>
<div class="r" style="left:824.00px;top:702.00px;width:1.00px;height:60.80px;background:#e2e2e6;"></div>
<div class="r" style="left:933.10px;top:702.00px;width:1.00px;height:60.80px;background:#e2e2e6;"></div>
<div class="r" style="left:1100.90px;top:702.00px;width:1.00px;height:60.80px;background:#e2e2e6;"></div>
<div class="r" style="left:1197.90px;top:702.00px;width:1.00px;height:60.80px;background:#e2e2e6;"></div>
<div class="r" style="left:1267.90px;top:702.00px;width:1.00px;height:60.80px;background:#e2e2e6;"></div>
<div class="r" style="left:1338.50px;top:702.00px;width:1.00px;height:60.80px;background:#e2e2e6;"></div>
<div class="r" style="left:1408.80px;top:702.00px;width:1.00px;height:60.80px;background:#cbcdcd;"></div>
<div class="r" style="left:1504.80px;top:702.00px;width:1.00px;height:60.80px;background:#cbcdcd;"></div>
<div class="r" style="left:1600.80px;top:702.00px;width:1.00px;height:60.80px;background:#cbcdcd;"></div>
<div class="r" style="left:1697.80px;top:702.00px;width:1.00px;height:60.80px;background:#cbcdcd;"></div>
<div class="r" style="left:1794.30px;top:702.00px;width:1.00px;height:60.80px;background:#e2e2e6;"></div>
<div class="r" style="left:298.80px;top:732.90px;width:10.40px;height:1.80px;background:#0a6b3a;"></div>
<div class="r" style="left:303.10px;top:728.60px;width:1.80px;height:10.40px;background:#0a6b3a;"></div>
<span class="t" style="left:329.30px;top:722.30px;font-size:13.5px;line-height:20px;font-weight:700;color:#262626;letter-spacing:0.000px;">4</span>
<span class="t" style="left:340.60px;top:722.30px;font-size:13.5px;line-height:20px;color:#474747;letter-spacing:0.473px;">(Corral 4)</span>
<span class="t" style="left:531.50px;top:709.05px;font-size:13.5px;line-height:20px;color:#3a3a3a;letter-spacing:0.299px;-webkit-text-stroke:.18px;">Cabezas: 200</span>
<span class="t" style="left:531.80px;top:733.35px;font-size:11.5px;line-height:20px;color:#5c5c5c;letter-spacing:-0.144px;">NTO: 44, TNO: 156</span>
<span class="t" style="left:660.72px;top:722.30px;font-size:13.5px;line-height:20px;color:#474747;letter-spacing:-0.614px;">100,00 %</span>
<span class="t" style="left:746.83px;top:722.30px;font-size:13.5px;line-height:20px;color:#474747;letter-spacing:0.094px;">11/05/2022</span>
<span class="t" style="left:834.80px;top:722.30px;font-size:13.5px;line-height:20px;color:#1b8a50;letter-spacing:0.352px;">Engorde 22/2</span>
<div class="r" style="left:943.90px;top:716.50px;width:31.80px;height:31.80px;background:#00914a;border-radius:4px 0 0 4px;"></div>
<div class="r" style="left:1059.70px;top:716.50px;width:32.90px;height:31.80px;background:#00914a;border-radius:0 4px 4px 0;"></div>
<div class="r" style="left:975.70px;top:716.50px;width:84.00px;height:31.80px;background:#fff;box-sizing:border-box;border-top:1px solid #dedede;border-bottom:1px solid #dedede;"></div>
<div class="r" style="left:956.50px;top:731.20px;width:6.50px;height:2.00px;background:#fff;"></div>
<div class="r" style="left:1072.70px;top:731.20px;width:7.00px;height:2.00px;background:#fff;"></div>
<div class="r" style="left:1075.20px;top:728.70px;width:2.00px;height:7.00px;background:#fff;"></div>
<span class="t" style="left:994.67px;top:722.60px;font-size:13.5px;line-height:20px;color:#666;letter-spacing:0.117px;">7,75 Kg</span>
<span class="t" style="left:1143.46px;top:722.30px;font-size:13.5px;line-height:20px;color:#474747;letter-spacing:0.306px;">302 Kg</span>
<span class="t" style="left:1210.93px;top:722.30px;font-size:13.5px;line-height:20px;color:#474747;letter-spacing:0.117px;">0,00 Kg</span>
<span class="t" style="left:1284.72px;top:722.30px;font-size:13.5px;line-height:20px;color:#474747;letter-spacing:-0.414px;">1,00 Kg</span>
<span class="t" style="left:1359.15px;top:722.30px;font-size:13.5px;line-height:20px;color:#474747;letter-spacing:-0.440px;">2,57 %</span>
<span class="t" style="left:1443.00px;top:722.30px;font-size:13px;line-height:20px;font-weight:700;color:#262626;letter-spacing:-0.155px;">2.310 Kg</span>
<span class="t" style="left:1563.60px;top:722.30px;font-size:13px;line-height:20px;font-weight:700;color:#12934f;letter-spacing:-0.157px;">0 Kg</span>
<span class="t" style="left:1635.00px;top:722.30px;font-size:13px;line-height:20px;font-weight:700;color:#f1303a;letter-spacing:-0.155px;">2.310 Kg</span>
<span class="t" style="left:1756.20px;top:722.30px;font-size:13px;line-height:20px;font-weight:700;color:#262626;letter-spacing:0.678px;">- Kg</span>
<svg class="r" style="left:1808.40px;top:714.10px;" width="13.60" height="10.00" viewBox="0 0 13.6 10"><path d="M1 0 V9 H13.6" fill="none" stroke="#0a6b3a" stroke-width="2"/><path d="M3 7 V4.2 L5 1 L7.2 3.6 L9.2 2.4 L12.2 6.2 V7 Z" fill="#0a6b3a"/></svg>
<svg class="r" style="left:1808.40px;top:737.90px;" width="13.60" height="13.00" viewBox="0 0 13.6 13"><path d="M8.6 2 L11.6 5 L4.4 12.2 L0.6 12.8 L1.2 9.2 Z" fill="#2e2e2e"/><circle cx="10.7" cy="2.9" r="2.2" fill="#2e2e2e"/><path d="M3.6 10 L8.4 5.2" stroke="#e8e8e8" stroke-width=".7" stroke-dasharray="1 .5"/><path d="M0.7 12.7 L1 10.9 L2.5 12.4 Z" fill="#e0e0e0"/><path d="M8.9 3.3 L10.3 4.7" stroke="#e8e8e8" stroke-width=".5"/></svg>
<div class="r" style="left:288.80px;top:762.80px;width:1547.50px;height:60.40px;background:#fff;"></div>
<div class="r" style="left:1409.30px;top:762.80px;width:385.50px;height:60.40px;background:#e5e5e5;"></div>
<div class="r" style="left:520.90px;top:762.80px;width:1.00px;height:60.40px;background:#ebebf0;"></div>
<div class="r" style="left:642.00px;top:762.80px;width:1.00px;height:60.40px;background:#ebebf0;"></div>
<div class="r" style="left:723.20px;top:762.80px;width:1.00px;height:60.40px;background:#ebebf0;"></div>
<div class="r" style="left:824.00px;top:762.80px;width:1.00px;height:60.40px;background:#ebebf0;"></div>
<div class="r" style="left:933.10px;top:762.80px;width:1.00px;height:60.40px;background:#ebebf0;"></div>
<div class="r" style="left:1100.90px;top:762.80px;width:1.00px;height:60.40px;background:#ebebf0;"></div>
<div class="r" style="left:1197.90px;top:762.80px;width:1.00px;height:60.40px;background:#ebebf0;"></div>
<div class="r" style="left:1267.90px;top:762.80px;width:1.00px;height:60.40px;background:#ebebf0;"></div>
<div class="r" style="left:1338.50px;top:762.80px;width:1.00px;height:60.40px;background:#ebebf0;"></div>
<div class="r" style="left:1408.80px;top:762.80px;width:1.00px;height:60.40px;background:#d6d8d8;"></div>
<div class="r" style="left:1504.80px;top:762.80px;width:1.00px;height:60.40px;background:#d6d8d8;"></div>
<div class="r" style="left:1600.80px;top:762.80px;width:1.00px;height:60.40px;background:#d6d8d8;"></div>
<div class="r" style="left:1697.80px;top:762.80px;width:1.00px;height:60.40px;background:#d6d8d8;"></div>
<div class="r" style="left:1794.30px;top:762.80px;width:1.00px;height:60.40px;background:#ebebf0;"></div>
<div class="r" style="left:298.80px;top:793.50px;width:10.40px;height:1.80px;background:#0a6b3a;"></div>
<div class="r" style="left:303.10px;top:789.20px;width:1.80px;height:10.40px;background:#0a6b3a;"></div>
<span class="t" style="left:329.30px;top:782.90px;font-size:13.5px;line-height:20px;font-weight:700;color:#262626;letter-spacing:0.000px;">5</span>
<span class="t" style="left:340.60px;top:782.90px;font-size:13.5px;line-height:20px;color:#474747;letter-spacing:0.473px;">(Corral 5)</span>
<span class="t" style="left:531.50px;top:769.65px;font-size:13.5px;line-height:20px;color:#3a3a3a;letter-spacing:0.299px;-webkit-text-stroke:.18px;">Cabezas: 200</span>
<span class="t" style="left:531.80px;top:793.95px;font-size:11.5px;line-height:20px;color:#5c5c5c;letter-spacing:0.106px;">TNA: 200</span>
<span class="t" style="left:660.72px;top:782.90px;font-size:13.5px;line-height:20px;color:#474747;letter-spacing:-0.614px;">100,00 %</span>
<span class="t" style="left:743.64px;top:782.90px;font-size:13.5px;line-height:20px;color:#474747;letter-spacing:0.337px;">17/05/2022</span>
<span class="t" style="left:834.80px;top:782.90px;font-size:13.5px;line-height:20px;color:#1b8a50;letter-spacing:0.352px;">Engorde 22/2</span>
<div class="r" style="left:943.90px;top:777.10px;width:31.80px;height:31.80px;background:#00914a;border-radius:4px 0 0 4px;"></div>
<div class="r" style="left:1059.70px;top:777.10px;width:32.90px;height:31.80px;background:#00914a;border-radius:0 4px 4px 0;"></div>
<div class="r" style="left:975.70px;top:777.10px;width:84.00px;height:31.80px;background:#fff;box-sizing:border-box;border-top:1px solid #dedede;border-bottom:1px solid #dedede;"></div>
<div class="r" style="left:956.50px;top:791.80px;width:6.50px;height:2.00px;background:#fff;"></div>
<div class="r" style="left:1072.70px;top:791.80px;width:7.00px;height:2.00px;background:#fff;"></div>
<div class="r" style="left:1075.20px;top:789.30px;width:2.00px;height:7.00px;background:#fff;"></div>
<span class="t" style="left:994.67px;top:783.20px;font-size:13.5px;line-height:20px;color:#666;letter-spacing:0.117px;">7,25 Kg</span>
<span class="t" style="left:1143.46px;top:782.90px;font-size:13.5px;line-height:20px;color:#474747;letter-spacing:0.306px;">284 Kg</span>
<span class="t" style="left:1210.93px;top:782.90px;font-size:13.5px;line-height:20px;color:#474747;letter-spacing:0.117px;">0,00 Kg</span>
<span class="t" style="left:1284.72px;top:782.90px;font-size:13.5px;line-height:20px;color:#474747;letter-spacing:-0.414px;">1,00 Kg</span>
<span class="t" style="left:1359.15px;top:782.90px;font-size:13.5px;line-height:20px;color:#474747;letter-spacing:-0.440px;">2,55 %</span>
<span class="t" style="left:1446.20px;top:782.90px;font-size:13px;line-height:20px;font-weight:700;color:#262626;letter-spacing:-0.612px;">2.161 Kg</span>
<span class="t" style="left:1563.60px;top:782.90px;font-size:13px;line-height:20px;font-weight:700;color:#12934f;letter-spacing:-0.157px;">0 Kg</span>
<span class="t" style="left:1638.20px;top:782.90px;font-size:13px;line-height:20px;font-weight:700;color:#f1303a;letter-spacing:-0.612px;">2.161 Kg</span>
<span class="t" style="left:1756.20px;top:782.90px;font-size:13px;line-height:20px;font-weight:700;color:#262626;letter-spacing:0.678px;">- Kg</span>
<svg class="r" style="left:1808.40px;top:774.70px;" width="13.60" height="10.00" viewBox="0 0 13.6 10"><path d="M1 0 V9 H13.6" fill="none" stroke="#0a6b3a" stroke-width="2"/><path d="M3 7 V4.2 L5 1 L7.2 3.6 L9.2 2.4 L12.2 6.2 V7 Z" fill="#0a6b3a"/></svg>
<svg class="r" style="left:1808.40px;top:798.50px;" width="13.60" height="13.00" viewBox="0 0 13.6 13"><path d="M8.6 2 L11.6 5 L4.4 12.2 L0.6 12.8 L1.2 9.2 Z" fill="#2e2e2e"/><circle cx="10.7" cy="2.9" r="2.2" fill="#2e2e2e"/><path d="M3.6 10 L8.4 5.2" stroke="#e8e8e8" stroke-width=".7" stroke-dasharray="1 .5"/><path d="M0.7 12.7 L1 10.9 L2.5 12.4 Z" fill="#e0e0e0"/><path d="M8.9 3.3 L10.3 4.7" stroke="#e8e8e8" stroke-width=".5"/></svg>
<div class="r" style="left:288.80px;top:823.20px;width:1547.50px;height:60.80px;background:#f2f2f2;"></div>
<div class="r" style="left:1409.30px;top:823.20px;width:385.50px;height:60.80px;background:#d9d9d9;"></div>
<div class="r" style="left:520.90px;top:823.20px;width:1.00px;height:60.80px;background:#e2e2e6;"></div>
<div class="r" style="left:642.00px;top:823.20px;width:1.00px;height:60.80px;background:#e2e2e6;"></div>
<div class="r" style="left:723.20px;top:823.20px;width:1.00px;height:60.80px;background:#e2e2e6;"></div>
<div class="r" style="left:824.00px;top:823.20px;width:1.00px;height:60.80px;background:#e2e2e6;"></div>
<div class="r" style="left:933.10px;top:823.20px;width:1.00px;height:60.80px;background:#e2e2e6;"></div>
<div class="r" style="left:1100.90px;top:823.20px;width:1.00px;height:60.80px;background:#e2e2e6;"></div>
<div class="r" style="left:1197.90px;top:823.20px;width:1.00px;height:60.80px;background:#e2e2e6;"></div>
<div class="r" style="left:1267.90px;top:823.20px;width:1.00px;height:60.80px;background:#e2e2e6;"></div>
<div class="r" style="left:1338.50px;top:823.20px;width:1.00px;height:60.80px;background:#e2e2e6;"></div>
<div class="r" style="left:1408.80px;top:823.20px;width:1.00px;height:60.80px;background:#cbcdcd;"></div>
<div class="r" style="left:1504.80px;top:823.20px;width:1.00px;height:60.80px;background:#cbcdcd;"></div>
<div class="r" style="left:1600.80px;top:823.20px;width:1.00px;height:60.80px;background:#cbcdcd;"></div>
<div class="r" style="left:1697.80px;top:823.20px;width:1.00px;height:60.80px;background:#cbcdcd;"></div>
<div class="r" style="left:1794.30px;top:823.20px;width:1.00px;height:60.80px;background:#e2e2e6;"></div>
<div class="r" style="left:298.80px;top:854.10px;width:10.40px;height:1.80px;background:#0a6b3a;"></div>
<div class="r" style="left:303.10px;top:849.80px;width:1.80px;height:10.40px;background:#0a6b3a;"></div>
<span class="t" style="left:329.30px;top:843.50px;font-size:13.5px;line-height:20px;font-weight:700;color:#262626;letter-spacing:0.000px;">6</span>
<span class="t" style="left:340.60px;top:843.50px;font-size:13.5px;line-height:20px;color:#474747;letter-spacing:0.473px;">(Corral 6)</span>
<span class="t" style="left:531.50px;top:830.25px;font-size:13.5px;line-height:20px;color:#3a3a3a;letter-spacing:0.010px;-webkit-text-stroke:.18px;">Cabezas: 199</span>
<span class="t" style="left:531.80px;top:854.55px;font-size:11.5px;line-height:20px;color:#5c5c5c;letter-spacing:-0.281px;">TNO: 199</span>
<span class="t" style="left:665.60px;top:843.50px;font-size:13.5px;line-height:20px;color:#474747;letter-spacing:-0.276px;">99,50 %</span>
<span class="t" style="left:743.64px;top:843.50px;font-size:13.5px;line-height:20px;color:#474747;letter-spacing:0.337px;">19/05/2022</span>
<span class="t" style="left:834.80px;top:843.50px;font-size:13.5px;line-height:20px;color:#1b8a50;letter-spacing:0.352px;">Engorde 22/2</span>
<div class="r" style="left:943.90px;top:837.70px;width:31.80px;height:31.80px;background:#00914a;border-radius:4px 0 0 4px;"></div>
<div class="r" style="left:1059.70px;top:837.70px;width:32.90px;height:31.80px;background:#00914a;border-radius:0 4px 4px 0;"></div>
<div class="r" style="left:975.70px;top:837.70px;width:84.00px;height:31.80px;background:#fff;box-sizing:border-box;border-top:1px solid #dedede;border-bottom:1px solid #dedede;"></div>
<div class="r" style="left:956.50px;top:852.40px;width:6.50px;height:2.00px;background:#fff;"></div>
<div class="r" style="left:1072.70px;top:852.40px;width:7.00px;height:2.00px;background:#fff;"></div>
<div class="r" style="left:1075.20px;top:849.90px;width:2.00px;height:7.00px;background:#fff;"></div>
<span class="t" style="left:994.67px;top:843.80px;font-size:13.5px;line-height:20px;color:#666;letter-spacing:0.117px;">7,50 Kg</span>
<span class="t" style="left:1143.46px;top:843.50px;font-size:13.5px;line-height:20px;color:#474747;letter-spacing:0.306px;">252 Kg</span>
<span class="t" style="left:1210.93px;top:843.50px;font-size:13.5px;line-height:20px;color:#474747;letter-spacing:0.117px;">0,00 Kg</span>
<span class="t" style="left:1281.53px;top:843.50px;font-size:13.5px;line-height:20px;color:#474747;letter-spacing:0.117px;">0,80 Kg</span>
<span class="t" style="left:1359.15px;top:843.50px;font-size:13.5px;line-height:20px;color:#474747;letter-spacing:-0.440px;">2,98 %</span>
<span class="t" style="left:1441.30px;top:843.50px;font-size:13px;line-height:20px;font-weight:700;color:#262626;letter-spacing:0.088px;">2.225 Kg</span>
<span class="t" style="left:1563.60px;top:843.50px;font-size:13px;line-height:20px;font-weight:700;color:#12934f;letter-spacing:-0.157px;">0 Kg</span>
<span class="t" style="left:1633.30px;top:843.50px;font-size:13px;line-height:20px;font-weight:700;color:#f1303a;letter-spacing:0.088px;">2.225 Kg</span>
<span class="t" style="left:1756.20px;top:843.50px;font-size:13px;line-height:20px;font-weight:700;color:#262626;letter-spacing:0.678px;">- Kg</span>
<svg class="r" style="left:1808.40px;top:835.30px;" width="13.60" height="10.00" viewBox="0 0 13.6 10"><path d="M1 0 V9 H13.6" fill="none" stroke="#0a6b3a" stroke-width="2"/><path d="M3 7 V4.2 L5 1 L7.2 3.6 L9.2 2.4 L12.2 6.2 V7 Z" fill="#0a6b3a"/></svg>
<svg class="r" style="left:1808.40px;top:859.10px;" width="13.60" height="13.00" viewBox="0 0 13.6 13"><path d="M8.6 2 L11.6 5 L4.4 12.2 L0.6 12.8 L1.2 9.2 Z" fill="#2e2e2e"/><circle cx="10.7" cy="2.9" r="2.2" fill="#2e2e2e"/><path d="M3.6 10 L8.4 5.2" stroke="#e8e8e8" stroke-width=".7" stroke-dasharray="1 .5"/><path d="M0.7 12.7 L1 10.9 L2.5 12.4 Z" fill="#e0e0e0"/><path d="M8.9 3.3 L10.3 4.7" stroke="#e8e8e8" stroke-width=".5"/></svg>
<div class="r" style="left:288.30px;top:167.00px;width:1.00px;height:699.40px;background:#ebebf0;"></div>
<div class="r" style="left:329.60px;top:296.00px;width:1506.70px;height:274.30px;background:#fff;box-sizing:border-box;border:1px solid #e4e5ec;"></div>
<div class="r" style="left:329.60px;top:296.00px;width:1506.70px;height:41.00px;background:#f7f7fa;box-sizing:border-box;border:1px solid #e4e5ec;"></div>
<div class="r" style="left:330.10px;top:337.00px;width:1505.70px;height:38.85px;background:#fff;"></div>
<div class="r" style="left:330.00px;top:337.00px;width:8.00px;height:38.85px;background:#1e2d3b;"></div>
<span class="t" style="left:345.30px;top:347.33px;font-size:13.5px;line-height:20px;color:#17784a;letter-spacing:0.078px;">T312 - Tropa 040622</span>
<span class="t" style="left:635.70px;top:347.33px;font-size:12.5px;line-height:20px;color:#474747;letter-spacing:-0.261px;">MARTIN</span>
<span class="t" style="left:885.30px;top:347.33px;font-size:13.5px;line-height:20px;color:#474747;letter-spacing:0.691px;">04/06/2022</span>
<span class="t" style="left:1317.83px;top:347.33px;font-size:13.5px;line-height:20px;color:#474747;letter-spacing:0.309px;">25 días</span>
<span class="t" style="left:1384.40px;top:347.33px;font-size:12px;line-height:20px;color:#474747;letter-spacing:0.331px;">Ternero: 28</span>
<div class="r" style="left:330.10px;top:375.85px;width:1505.70px;height:38.85px;background:#f2f2f2;"></div>
<div class="r" style="left:330.00px;top:375.85px;width:8.00px;height:38.85px;background:#2b2b2b;"></div>
<span class="t" style="left:345.30px;top:385.99px;font-size:13.5px;line-height:20px;color:#17784a;letter-spacing:0.339px;">T303 - Tropa 250522 Campo H</span>
<span class="t" style="left:635.70px;top:385.99px;font-size:12.5px;line-height:20px;color:#474747;letter-spacing:-0.261px;">MARTIN</span>
<span class="t" style="left:885.30px;top:385.99px;font-size:13.5px;line-height:20px;color:#474747;letter-spacing:0.691px;">25/05/2022</span>
<span class="t" style="left:1317.83px;top:385.99px;font-size:13.5px;line-height:20px;color:#474747;letter-spacing:0.309px;">34 días</span>
<span class="t" style="left:1384.40px;top:385.99px;font-size:12px;line-height:20px;color:#474747;letter-spacing:0.045px;">Vaquillona: 13</span>
<div class="r" style="left:330.10px;top:414.70px;width:1505.70px;height:38.85px;background:#fff;"></div>
<div class="r" style="left:330.00px;top:414.70px;width:8.00px;height:38.85px;background:#1e2d3b;"></div>
<span class="t" style="left:345.30px;top:424.65px;font-size:13.5px;line-height:20px;color:#17784a;letter-spacing:0.095px;">T299 - Tropa 190522</span>
<span class="t" style="left:635.70px;top:424.65px;font-size:12.5px;line-height:20px;color:#474747;letter-spacing:-0.261px;">MARTIN</span>
<span class="t" style="left:885.30px;top:424.65px;font-size:13.5px;line-height:20px;color:#474747;letter-spacing:0.337px;">19/05/2022</span>
<span class="t" style="left:1321.02px;top:424.65px;font-size:13.5px;line-height:20px;color:#474747;letter-spacing:-0.222px;">41 días</span>
<span class="t" style="left:1384.40px;top:424.65px;font-size:12px;line-height:20px;color:#474747;letter-spacing:0.331px;">Ternera: 44</span>
<div class="r" style="left:330.10px;top:453.55px;width:1505.70px;height:38.85px;background:#f2f2f2;"></div>
<div class="r" style="left:330.00px;top:453.55px;width:8.00px;height:38.85px;background:#1e2d3b;"></div>
<span class="t" style="left:345.30px;top:463.31px;font-size:13.5px;line-height:20px;color:#17784a;letter-spacing:0.040px;">T298 - Tropa 170522</span>
<span class="t" style="left:635.70px;top:463.31px;font-size:12.5px;line-height:20px;color:#474747;letter-spacing:-0.261px;">MARTIN</span>
<span class="t" style="left:885.30px;top:463.31px;font-size:13.5px;line-height:20px;color:#474747;letter-spacing:0.337px;">17/05/2022</span>
<span class="t" style="left:1317.83px;top:463.31px;font-size:13.5px;line-height:20px;color:#474747;letter-spacing:0.309px;">42 días</span>
<span class="t" style="left:1384.40px;top:463.31px;font-size:12px;line-height:20px;color:#474747;letter-spacing:0.331px;">Ternera: 50</span>
<div class="r" style="left:330.10px;top:492.40px;width:1505.70px;height:38.85px;background:#fff;"></div>
<div class="r" style="left:330.00px;top:492.40px;width:8.00px;height:38.85px;background:#1e2d3b;"></div>
<span class="t" style="left:345.30px;top:501.97px;font-size:13.5px;line-height:20px;color:#17784a;letter-spacing:0.056px;">T295 - Tropa 130522</span>
<span class="t" style="left:635.70px;top:501.97px;font-size:12.5px;line-height:20px;color:#474747;letter-spacing:-0.261px;">MARTIN</span>
<span class="t" style="left:885.30px;top:501.97px;font-size:13.5px;line-height:20px;color:#474747;letter-spacing:0.337px;">13/05/2022</span>
<span class="t" style="left:1317.83px;top:501.97px;font-size:13.5px;line-height:20px;color:#474747;letter-spacing:0.309px;">47 días</span>
<span class="t" style="left:1384.40px;top:501.97px;font-size:12px;line-height:20px;color:#474747;letter-spacing:0.331px;">Ternera: 44</span>
<div class="r" style="left:330.10px;top:531.25px;width:1505.70px;height:38.35px;background:#f2f2f2;"></div>
<div class="r" style="left:330.00px;top:531.25px;width:8.00px;height:38.35px;background:#1e2d3b;"></div>
<span class="t" style="left:345.30px;top:540.62px;font-size:13.5px;line-height:20px;color:#17784a;letter-spacing:0.332px;">T242 - Tropa 020422/2</span>
<span class="t" style="left:635.70px;top:540.62px;font-size:12.5px;line-height:20px;color:#474747;letter-spacing:-0.261px;">MARTIN</span>
<span class="t" style="left:885.30px;top:540.62px;font-size:13.5px;line-height:20px;color:#474747;letter-spacing:0.691px;">02/04/2022</span>
<span class="t" style="left:1317.83px;top:540.62px;font-size:13.5px;line-height:20px;color:#474747;letter-spacing:0.309px;">87 días</span>
<span class="t" style="left:1384.40px;top:540.62px;font-size:12px;line-height:20px;color:#474747;letter-spacing:0.316px;">Ternera: 2</span>
<div class="r" style="left:625.00px;top:296.00px;width:1.00px;height:274.30px;background:#e4e5ec;"></div>
<div class="r" style="left:874.50px;top:296.00px;width:1.00px;height:274.30px;background:#e4e5ec;"></div>
<div class="r" style="left:1145.50px;top:296.00px;width:1.00px;height:274.30px;background:#e4e5ec;"></div>
<div class="r" style="left:1373.00px;top:296.00px;width:1.00px;height:274.30px;background:#e4e5ec;"></div>
<span class="t" style="left:340.00px;top:307.30px;font-size:13.5px;line-height:20px;color:#575757;letter-spacing:0.488px;">Tropa</span>
<span class="t" style="left:636.20px;top:307.30px;font-size:13.5px;line-height:20px;color:#575757;letter-spacing:0.467px;">Propietario</span>
<span class="t" style="left:885.30px;top:307.30px;font-size:13.5px;line-height:20px;color:#575757;letter-spacing:0.345px;">Fecha Ingreso</span>
<span class="t" style="left:1157.00px;top:307.30px;font-size:13.5px;line-height:20px;color:#575757;letter-spacing:0.320px;">Días Corral</span>
<span class="t" style="left:1384.30px;top:307.30px;font-size:13.5px;line-height:20px;color:#575757;letter-spacing:0.746px;">Hacienda</span>
<div class="r" style="left:601.70px;top:309.20px;width:2.60px;height:2.60px;background:#0a6b3a;border-radius:50%;"></div>
<div class="r" style="left:601.70px;top:314.20px;width:2.60px;height:2.60px;background:#0a6b3a;border-radius:50%;"></div>
<div class="r" style="left:601.70px;top:319.20px;width:2.60px;height:2.60px;background:#0a6b3a;border-radius:50%;"></div>
</div>
<span class="t" style="left:264.00px;top:911.20px;font-size:13.5px;line-height:20px;color:#9c9eb0;letter-spacing:-0.033px;">2022 ©</span>
<span class="t" style="left:311.30px;top:911.20px;font-size:13.5px;line-height:20px;color:#0a6b3a;letter-spacing:0.376px;">SoftwareThinking</span>
<span class="t" style="left:1389.10px;top:911.10px;font-size:13.5px;line-height:20px;color:#0a6b3a;letter-spacing:-0.505px;">Empresa: DEMO SIGEF</span>
<span class="t" style="left:1543.30px;top:911.10px;font-size:13.5px;line-height:20px;color:#0a6b3a;letter-spacing:-0.274px;">Plan Actual: PREMIUM (BETA)</span>
<span class="t" style="left:1738.90px;top:911.10px;font-size:13.5px;line-height:20px;color:#0a6b3a;letter-spacing:0.891px;">Contacto</span>
<svg class="r" style="left:1815.00px;top:913.50px;" width="14.50" height="14.00" viewBox="0 0 14.5 14"><path d="M0.8 7.4 A6.2 6.4 0 0 1 13.2 7.4 V10.6 Q13.2 12.9 10.6 12.9 H7.6" fill="none" stroke="#0a6b3a" stroke-width="1.15"/><ellipse cx="4.4" cy="7.2" rx="1.35" ry="2.2" fill="#0a6b3a"/><ellipse cx="9.9" cy="7.2" rx="1.35" ry="2.2" fill="#0a6b3a"/><ellipse cx="6.9" cy="12.6" rx="1.7" ry="0.95" fill="#0a6b3a"/></svg>
<span class="t" style="left:1832.00px;top:911.10px;font-size:13.5px;line-height:20px;color:#0a6b3a;letter-spacing:0.381px;">Soporte</span>
<div class="r" style="left:1868.00px;top:164.00px;width:6.30px;height:46.00px;background:#e8714f;border-radius:2px;"></div>
<div class="r" style="left:1868.00px;top:260.00px;width:6.00px;height:94.00px;background:#2a2a2a;border-radius:2px;"></div>
<div class="r" style="left:1855.00px;top:11.00px;width:15.00px;height:25.00px;background:#1c2933;border-radius:6px 13px 4px 0;"></div>
<div class="r" style="left:1541.3px;top:2px;width:329.7px;height:705px;border-radius:48px 48px 52px 52px/48px 48px 55px 55px;background:#2b2b2b;box-shadow:inset 0 0 0 1px #444,inset 0 0 0 4px #565656,inset 0 0 0 5.2px #353535,inset 0 0 1px 8px #444,0 1.5px 2px rgba(0,0,0,.55),0 4px 5px rgba(0,0,0,.12);"></div>
<div class="r" style="left:1627.50px;top:25.50px;width:9.00px;height:9.00px;background:#383838;border-radius:50%;box-shadow:inset 0 0 0 1.5px #444;"></div>
<div class="r" style="left:1630.30px;top:28.30px;width:3.40px;height:3.40px;background:#2c2c30;border-radius:50%;"></div>
<div class="r" style="left:1687.00px;top:28.30px;width:38.00px;height:5.40px;background:#3a3a3a;border-radius:3px;"></div>
<div class="r" style="left:1693.00px;top:29.60px;width:2.60px;height:2.80px;background:#474747;border-radius:1px;"></div>
<div class="r" style="left:1698.00px;top:29.60px;width:2.60px;height:2.80px;background:#474747;border-radius:1px;"></div>
<div class="r" style="left:1703.00px;top:29.60px;width:2.60px;height:2.80px;background:#474747;border-radius:1px;"></div>
<div class="r" style="left:1708.00px;top:29.60px;width:2.60px;height:2.80px;background:#474747;border-radius:1px;"></div>
<div class="r" style="left:1713.00px;top:29.60px;width:2.60px;height:2.80px;background:#474747;border-radius:1px;"></div>
<div class="r" style="left:1718.00px;top:29.60px;width:2.60px;height:2.80px;background:#474747;border-radius:1px;"></div>
<div class="r" style="left:1556px;top:48.6px;width:300px;height:634.7px;border-radius:50px 50px 50px 50px/38px 38px 45px 45px;background:#eaeaea;overflow:hidden;"><div class="r" style="left:-1556px;top:-48.6px;width:1884px;height:939px;">
<div class="r" style="left:1556.00px;top:48.60px;width:300.00px;height:37.60px;background:#2a8258;"></div>
<svg class="r" style="left:1568.40px;top:59.60px;" width="12.40" height="11.60" viewBox="0 0 12.4 11.6"><path d="M12.2 5.8 H1.6 M6.2 0.8 L1.2 5.8 L6.2 10.8" fill="none" stroke="#fff" stroke-width="1.5"/></svg>
<span class="t" style="left:1607.70px;top:56.60px;font-size:16px;line-height:20px;color:#fff;letter-spacing:-0.671px;-webkit-text-stroke:.18px;">Corrales</span>
<div class="r" style="left:0;top:86.7px;width:1884px;height:577.3px;overflow:hidden;"><div class="r" style="left:0;top:-86.7px;width:1884px;height:939px;">
<div class="r" style="left:1566px;top:102.20px;width:277.3px;height:193.60px;background:#fff;border-radius:10px 6px 6px 10px;box-shadow:0 1px 2px rgba(0,0,0,.28);overflow:hidden;"><div style="position:absolute;left:0;top:0;bottom:0;width:10.8px;background:#27a163"></div></div>
<span class="t" style="left:1583.20px;top:107.00px;font-size:14px;line-height:18px;font-weight:700;color:#209a5d;letter-spacing:-0.468px;">Corral: 1</span>
<span class="t" style="left:1772.90px;top:107.40px;font-size:14px;line-height:18px;font-weight:700;color:#209a5d;letter-spacing:-0.181px;">163 Cab.</span>
<div class="r" style="left:1583.20px;top:127.20px;width:246.00px;height:1.00px;background:#dedede;"></div>
<span class="t" style="left:1583.20px;top:129.90px;font-size:11.5px;line-height:16px;letter-spacing:-0.145px"><span style="font-size:11.5px;color:#5f5f5f">Dieta: </span><span style="font-size:12px;font-weight:700;color:#222">Dieta de enfermería</span></span>
<span class="t" style="left:1762.51px;top:130.40px;font-size:11.5px;line-height:16px;letter-spacing:-0.266px"><span style="font-size:11.5px;color:#5f5f5f">Obj: </span><span style="font-size:12.5px;font-weight:700;color:#222">1.370</span><span style="font-size:11.5px;color:#5f5f5f">Kg</span></span>
<span class="t" style="left:1583.20px;top:147.20px;font-size:11px;line-height:16px;letter-spacing:-0.198px"><span style="font-size:11px;color:#5f5f5f">Cat: </span><span style="font-size:11px;color:#333">NOV: 28, NOVI: 12, TNO: 123</span></span>
<span class="t" style="left:1779.30px;top:148.80px;font-size:11.5px;line-height:16px;letter-spacing:-0.462px"><span style="font-size:11.5px;color:#5f5f5f">Desc: </span><span style="font-size:12.5px;font-weight:700;color:#222">0</span><span style="font-size:11.5px;color:#5f5f5f">Kg</span></span>
<span class="t" style="left:1583.20px;top:165.60px;font-size:12px;line-height:16px;letter-spacing:-0.027px"><span style="font-size:12px;font-weight:700;color:#209a5d">Meta MS: 8,16Kg</span></span>
<span class="t" style="left:1756.17px;top:166.40px;font-size:12px;line-height:16px;letter-spacing:-0.137px"><span style="font-size:12px;font-weight:700;color:#e0282e">Falt: 1.370Kg</span></span>
<span class="t" style="left:1783.60px;top:184.10px;font-size:11.5px;line-height:16px;letter-spacing:-0.468px"><span style="font-size:11.5px;color:#5f5f5f">Rem: </span><span style="font-size:12.5px;font-weight:700;color:#222">-</span><span style="font-size:11.5px;color:#5f5f5f">Kg</span></span>
<span class="t" style="left:1583.20px;top:225.30px;font-size:12px;line-height:16px;letter-spacing:0.138px"><span style="font-size:12px;font-weight:700;color:#209a5d">Meta MS</span></span>
<div class="r" style="left:1638.00px;top:214.80px;width:33.00px;height:34.00px;background:#27a163;border-radius:7.5px;"></div>
<div class="r" style="left:1645.00px;top:222.30px;width:19.00px;height:19.00px;background:#fff;border-radius:50%;"></div>
<div class="r" style="left:1648.80px;top:230.45px;width:11.40px;height:2.70px;background:#27a163;border-radius:1px;"></div>
<div class="r" style="left:1680.60px;top:216.40px;width:106.20px;height:31.40px;background:#fff;box-sizing:border-box;border:1px solid #dcdcdc;border-radius:5px;"></div>
<span class="t" style="left:1720.45px;top:222.70px;font-size:15px;line-height:20px;color:#333;letter-spacing:-0.834px;">8,16</span>
<div class="r" style="left:1796.90px;top:214.80px;width:32.70px;height:34.00px;background:#27a163;border-radius:7.5px;"></div>
<div class="r" style="left:1803.75px;top:222.30px;width:19.00px;height:19.00px;background:#fff;border-radius:50%;"></div>
<div class="r" style="left:1807.55px;top:230.45px;width:11.40px;height:2.70px;background:#27a163;border-radius:1px;"></div>
<div class="r" style="left:1811.90px;top:226.10px;width:2.70px;height:11.40px;background:#27a163;border-radius:1px;"></div>
<div class="r" style="left:1583.00px;top:253.90px;width:121.00px;height:34.10px;background:#27a163;border-radius:9px;"></div>
<div class="r" style="left:1709.20px;top:253.90px;width:120.30px;height:34.10px;background:#27a163;border-radius:9px;"></div>
<span class="t" style="left:1610.25px;top:260.80px;font-size:12px;line-height:20px;font-weight:700;color:#fff;letter-spacing:0.021px;">NOTIFICAR</span>
<span class="t" style="left:1737.50px;top:261.10px;font-size:12px;line-height:20px;font-weight:700;color:#fff;letter-spacing:0.055px;">CONSUMO</span>
<div class="r" style="left:1566px;top:303.20px;width:277.3px;height:100.50px;background:#fff;border-radius:10px 6px 6px 10px;box-shadow:0 1px 2px rgba(0,0,0,.28);overflow:hidden;"><div style="position:absolute;left:0;top:0;bottom:0;width:10.8px;background:#7f7f7f"></div></div>
<span class="t" style="left:1583.20px;top:308.00px;font-size:14px;line-height:18px;font-weight:700;color:#209a5d;letter-spacing:-0.468px;">Corral: 2</span>
<span class="t" style="left:1780.51px;top:308.40px;font-size:14px;line-height:18px;font-weight:700;color:#209a5d;letter-spacing:-0.183px;">60 Cab.</span>
<div class="r" style="left:1583.20px;top:328.20px;width:246.00px;height:1.00px;background:#dedede;"></div>
<span class="t" style="left:1583.20px;top:330.90px;font-size:11.5px;line-height:16px;letter-spacing:-0.129px"><span style="font-size:11.5px;color:#5f5f5f">Dieta: </span><span style="font-size:12px;font-weight:700;color:#222">Inicial</span></span>
<span class="t" style="left:1772.50px;top:331.40px;font-size:11.5px;line-height:16px;letter-spacing:-0.276px"><span style="font-size:11.5px;color:#5f5f5f">Obj: </span><span style="font-size:12.5px;font-weight:700;color:#222">787</span><span style="font-size:11.5px;color:#5f5f5f">Kg</span></span>
<span class="t" style="left:1583.20px;top:348.20px;font-size:11px;line-height:16px;letter-spacing:-0.200px"><span style="font-size:11px;color:#5f5f5f">Cat: </span><span style="font-size:11px;color:#333">NOV: 40, NOVI: 20</span></span>
<span class="t" style="left:1779.30px;top:349.80px;font-size:11.5px;line-height:16px;letter-spacing:-0.462px"><span style="font-size:11.5px;color:#5f5f5f">Desc: </span><span style="font-size:12.5px;font-weight:700;color:#222">0</span><span style="font-size:11.5px;color:#5f5f5f">Kg</span></span>
<span class="t" style="left:1583.20px;top:366.60px;font-size:12px;line-height:16px;letter-spacing:-0.027px"><span style="font-size:12px;font-weight:700;color:#209a5d">Meta MS: 9,03Kg</span></span>
<span class="t" style="left:1765.95px;top:367.40px;font-size:12px;line-height:16px;letter-spacing:-0.142px"><span style="font-size:12px;font-weight:700;color:#e0282e">Falt: 787Kg</span></span>
<span class="t" style="left:1783.60px;top:385.10px;font-size:11.5px;line-height:16px;letter-spacing:-0.468px"><span style="font-size:11.5px;color:#5f5f5f">Rem: </span><span style="font-size:12.5px;font-weight:700;color:#222">-</span><span style="font-size:11.5px;color:#5f5f5f">Kg</span></span>
<div class="r" style="left:1566px;top:411.20px;width:277.3px;height:101.60px;background:#fff;border-radius:10px 6px 6px 10px;box-shadow:0 1px 2px rgba(0,0,0,.28);overflow:hidden;"><div style="position:absolute;left:0;top:0;bottom:0;width:10.8px;background:#7f7f7f"></div></div>
<span class="t" style="left:1583.20px;top:416.00px;font-size:14px;line-height:18px;font-weight:700;color:#209a5d;letter-spacing:-0.468px;">Corral: 3</span>
<span class="t" style="left:1772.90px;top:416.40px;font-size:14px;line-height:18px;font-weight:700;color:#209a5d;letter-spacing:-0.181px;">170 Cab.</span>
<div class="r" style="left:1583.20px;top:436.20px;width:246.00px;height:1.00px;background:#dedede;"></div>
<span class="t" style="left:1583.20px;top:438.90px;font-size:11.5px;line-height:16px;letter-spacing:-0.129px"><span style="font-size:11.5px;color:#5f5f5f">Dieta: </span><span style="font-size:12px;font-weight:700;color:#222">Inicial</span></span>
<span class="t" style="left:1762.51px;top:439.40px;font-size:11.5px;line-height:16px;letter-spacing:-0.266px"><span style="font-size:11.5px;color:#5f5f5f">Obj: </span><span style="font-size:12.5px;font-weight:700;color:#222">2.453</span><span style="font-size:11.5px;color:#5f5f5f">Kg</span></span>
<span class="t" style="left:1583.20px;top:456.20px;font-size:11px;line-height:16px;letter-spacing:-0.197px"><span style="font-size:11px;color:#5f5f5f">Cat: </span><span style="font-size:11px;color:#333">NOV: 50, TNA: 59, TNO: 61</span></span>
<span class="t" style="left:1779.30px;top:457.80px;font-size:11.5px;line-height:16px;letter-spacing:-0.462px"><span style="font-size:11.5px;color:#5f5f5f">Desc: </span><span style="font-size:12.5px;font-weight:700;color:#222">0</span><span style="font-size:11.5px;color:#5f5f5f">Kg</span></span>
<span class="t" style="left:1583.20px;top:474.60px;font-size:12px;line-height:16px;letter-spacing:-0.027px"><span style="font-size:12px;font-weight:700;color:#209a5d">Meta MS: 9,94Kg</span></span>
<span class="t" style="left:1756.17px;top:475.40px;font-size:12px;line-height:16px;letter-spacing:-0.137px"><span style="font-size:12px;font-weight:700;color:#e0282e">Falt: 2.453Kg</span></span>
<span class="t" style="left:1783.60px;top:493.10px;font-size:11.5px;line-height:16px;letter-spacing:-0.468px"><span style="font-size:11.5px;color:#5f5f5f">Rem: </span><span style="font-size:12.5px;font-weight:700;color:#222">-</span><span style="font-size:11.5px;color:#5f5f5f">Kg</span></span>
<div class="r" style="left:1566px;top:519.60px;width:277.3px;height:100.30px;background:#fff;border-radius:10px 6px 6px 10px;box-shadow:0 1px 2px rgba(0,0,0,.28);overflow:hidden;"><div style="position:absolute;left:0;top:0;bottom:0;width:10.8px;background:#7f7f7f"></div></div>
<span class="t" style="left:1583.20px;top:524.40px;font-size:14px;line-height:18px;font-weight:700;color:#209a5d;letter-spacing:-0.468px;">Corral: 4</span>
<span class="t" style="left:1780.51px;top:524.80px;font-size:14px;line-height:18px;font-weight:700;color:#209a5d;letter-spacing:-0.183px;">19 Cab.</span>
<div class="r" style="left:1583.20px;top:544.60px;width:246.00px;height:1.00px;background:#dedede;"></div>
<span class="t" style="left:1583.20px;top:547.30px;font-size:11.5px;line-height:16px;letter-spacing:-0.150px"><span style="font-size:11.5px;color:#5f5f5f">Dieta: </span><span style="font-size:12px;font-weight:700;color:#222">Engorde calor</span></span>
<span class="t" style="left:1772.50px;top:547.80px;font-size:11.5px;line-height:16px;letter-spacing:-0.276px"><span style="font-size:11.5px;color:#5f5f5f">Obj: </span><span style="font-size:12.5px;font-weight:700;color:#222">225</span><span style="font-size:11.5px;color:#5f5f5f">Kg</span></span>
<span class="t" style="left:1583.20px;top:564.60px;font-size:11px;line-height:16px;letter-spacing:-0.206px"><span style="font-size:11px;color:#5f5f5f">Cat: </span><span style="font-size:11px;color:#333">NOVI: 19</span></span>
<span class="t" style="left:1779.30px;top:566.20px;font-size:11.5px;line-height:16px;letter-spacing:-0.462px"><span style="font-size:11.5px;color:#5f5f5f">Desc: </span><span style="font-size:12.5px;font-weight:700;color:#222">0</span><span style="font-size:11.5px;color:#5f5f5f">Kg</span></span>
<span class="t" style="left:1583.20px;top:583.00px;font-size:12px;line-height:16px;letter-spacing:-0.027px"><span style="font-size:12px;font-weight:700;color:#209a5d">Meta MS: 10,00Kg</span></span>
<span class="t" style="left:1765.95px;top:583.80px;font-size:12px;line-height:16px;letter-spacing:-0.142px"><span style="font-size:12px;font-weight:700;color:#e0282e">Falt: 225Kg</span></span>
<span class="t" style="left:1783.60px;top:601.50px;font-size:11.5px;line-height:16px;letter-spacing:-0.468px"><span style="font-size:11.5px;color:#5f5f5f">Rem: </span><span style="font-size:12.5px;font-weight:700;color:#222">-</span><span style="font-size:11.5px;color:#5f5f5f">Kg</span></span>
<div class="r" style="left:1566px;top:628.60px;width:277.3px;height:100.50px;background:#fff;border-radius:10px 6px 6px 10px;box-shadow:0 1px 2px rgba(0,0,0,.28);overflow:hidden;"><div style="position:absolute;left:0;top:0;bottom:0;width:10.8px;background:#7f7f7f"></div></div>
<span class="t" style="left:1583.20px;top:633.40px;font-size:14px;line-height:18px;font-weight:700;color:#209a5d;letter-spacing:-0.468px;">Corral: 5</span>
<span class="t" style="left:1780.51px;top:633.80px;font-size:14px;line-height:18px;font-weight:700;color:#209a5d;letter-spacing:-0.183px;">47 Cab.</span>
<div class="r" style="left:1583.20px;top:653.60px;width:246.00px;height:1.00px;background:#dedede;"></div>
<span class="t" style="left:1583.20px;top:656.30px;font-size:11.5px;line-height:16px;letter-spacing:-0.129px"><span style="font-size:11.5px;color:#5f5f5f">Dieta: </span><span style="font-size:12px;font-weight:700;color:#222">Inicial</span></span>
<span class="t" style="left:1772.50px;top:656.80px;font-size:11.5px;line-height:16px;letter-spacing:-0.276px"><span style="font-size:11.5px;color:#5f5f5f">Obj: </span><span style="font-size:12.5px;font-weight:700;color:#222">552</span><span style="font-size:11.5px;color:#5f5f5f">Kg</span></span>
<span class="t" style="left:1583.20px;top:673.60px;font-size:11px;line-height:16px;letter-spacing:-0.213px"><span style="font-size:11px;color:#5f5f5f">Cat: </span><span style="font-size:11px;color:#333">NOV: 47</span></span>
<span class="t" style="left:1779.30px;top:675.20px;font-size:11.5px;line-height:16px;letter-spacing:-0.462px"><span style="font-size:11.5px;color:#5f5f5f">Desc: </span><span style="font-size:12.5px;font-weight:700;color:#222">0</span><span style="font-size:11.5px;color:#5f5f5f">Kg</span></span>
<span class="t" style="left:1583.20px;top:692.00px;font-size:12px;line-height:16px;letter-spacing:-0.027px"><span style="font-size:12px;font-weight:700;color:#209a5d">Meta MS: 9,50Kg</span></span>
<span class="t" style="left:1765.95px;top:692.80px;font-size:12px;line-height:16px;letter-spacing:-0.142px"><span style="font-size:12px;font-weight:700;color:#e0282e">Falt: 552Kg</span></span>
<span class="t" style="left:1783.60px;top:710.50px;font-size:11.5px;line-height:16px;letter-spacing:-0.468px"><span style="font-size:11.5px;color:#5f5f5f">Rem: </span><span style="font-size:12.5px;font-weight:700;color:#222">-</span><span style="font-size:11.5px;color:#5f5f5f">Kg</span></span>
</div></div>
<div class="r" style="left:1556.00px;top:673.50px;width:300.00px;height:10.50px;background:#f4f4f4;"></div>
</div></div>
</body></html>
